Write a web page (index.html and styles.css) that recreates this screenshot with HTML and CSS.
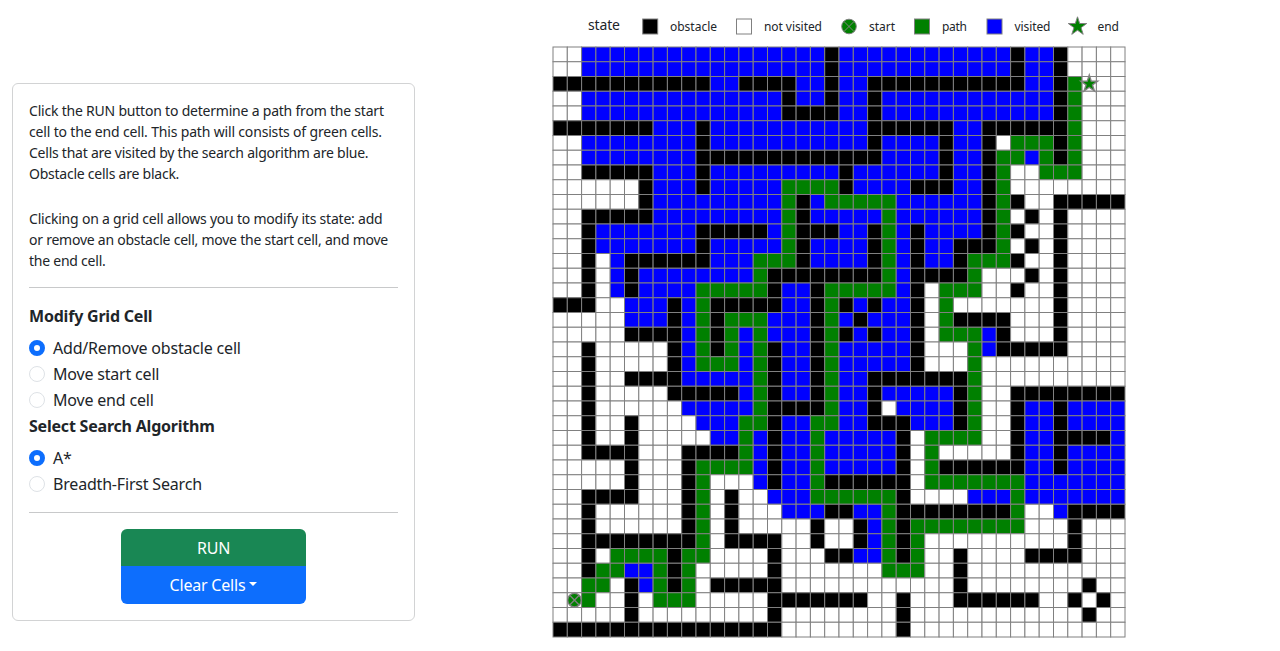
FILE: index.html
```html
<!DOCTYPE html>
<html lang="en">
<head>
<meta charset="utf-8">
<title>Path Finder</title>
<link rel="stylesheet" href="styles.css">
</head>
<body>
<main class="page">
  <section class="card">
    <p class="info"><span class="loose">Click the RUN button to determine a path from the start</span><br><span class="looser">cell to the end cell. This path will consists of green cells.</span><br>Cells that are visited by the search algorithm are blue.<br>Obstacle cells are black.</p>
    <p class="info"><span class="loose">Clicking on a grid cell allows you to modify its state: add</span><br>or remove an obstacle cell, move the start cell, and move<br>the end cell.</p>
    <hr class="rule">
    <h2 class="heading">Modify Grid Cell</h2>
    <label class="option"><input type="radio" class="radio" name="modify" checked><span>Add/Remove obstacle cell</span></label>
    <label class="option"><input type="radio" class="radio" name="modify"><span>Move start cell</span></label>
    <label class="option"><input type="radio" class="radio" name="modify"><span>Move end cell</span></label>
    <h2 class="heading">Select Search Algorithm</h2>
    <label class="option"><input type="radio" class="radio" name="algo" checked><span>A*</span></label>
    <label class="option"><input type="radio" class="radio" name="algo"><span>Breadth-First Search</span></label>
    <hr class="rule low">
    <div class="buttons">
      <button class="btn run">RUN</button>
      <button class="btn clear">Clear Cells<span class="caret"></span></button>
    </div>
  </section>
  <svg class="chart" id="chart" width="590" height="645" viewBox="545 0 590 645"></svg>
</main>
<script src="grid.js"></script>
</body>
</html>
```
FILE: styles.css
```css
* { box-sizing: border-box; }
body {
  margin: 0;
  background: #fff;
  color: #212529;
  font-family: "Noto Sans", "Open Sans", sans-serif;
  font-size: 16px;
  overflow: hidden;
}
.page { display: flex; align-items: flex-start; height: 651px; padding-left: 12px; }
.card {
  width: 403px;
  height: 538px;
  margin-top: 83px;
  padding: 16px;
  border: 1px solid #d2d3d4;
  border-radius: 6px;
}
.info { margin: 0 0 24px; font-size: 14px; line-height: 21px; letter-spacing: -0.24px; white-space: nowrap; }
.loose { letter-spacing: -0.21px; }
.looser { letter-spacing: -0.17px; }
.info + .rule { margin-top: -8px; }
.rule { margin: 0 0 16px; height: 1px; border: 0; background: #c8c9ca; }
.heading { margin: 0 0 8px; font-size: 16px; line-height: 24px; font-weight: 700; letter-spacing: -0.21px; }
.option { display: flex; align-items: center; gap: 8px; height: 24px; margin-bottom: 2px; line-height: 24px; letter-spacing: -0.19px; }
.radio {
  appearance: none;
  width: 16px;
  height: 16px;
  margin: 0;
  border: 1px solid #dee2e6;
  border-radius: 50%;
  background: #fff;
}
.radio:checked { border: 5px solid #0d6efd; }
.low { margin-top: 16px; }
.buttons { display: flex; flex-direction: column; width: 185px; margin: 0 auto; }
.btn {
  display: flex;
  align-items: center;
  justify-content: center;
  height: 38px;
  padding: 0;
  border: 0;
  color: #fff;
  font: inherit;
  letter-spacing: -0.2px;
}
.run { height: 37px; background: #198754; border-radius: 6px 6px 0 0; }
.clear { background: #0d6efd; border-radius: 0 0 6px 6px; }
.caret { margin-left: 4px; margin-top: -2px; border: 4.8px solid transparent; border-top-color: #fff; border-bottom: 0; }
.chart { margin-left: 130px; flex: none; }
.cell { stroke: #808080; stroke-width: 1; }
.obstacle { fill: #000; }
.empty { fill: #fff; }
.visited { fill: #00f; }
.trail { fill: #008000; }
.marker { stroke-width: 1.4; }
.cross { fill: none; stroke: #808080; stroke-width: 1; }
.cross.marker { stroke-width: 1.4; }
.legend-label { font-size: 12px; fill: #212529; }
.legend-title { font-size: 14px; fill: #212529; }
```
FILE: grid.js
```js
const ROWS = [
  "..bbbbbbbb bbbbbbbbb# bbbbbbbbbb bb#bb#....",
  "..bbbbbbbb bbbbbbbbb# bbbbbbbbbb bb#bb#....",
  "########## #bb####bb# bb######## ###bb#gE..",
  "..bbbbbbbb bbbbbb#bb# bb#bbbbbbb bbbbb#g...",
  "..bbbbbbbb bbbbbb#### bb#bbbbbbb bbbbb#g...",
  "#######bbb #bbbbbbbbb bb######bb ######g...",
  "..bbbbbbbb #bbbbbbbbb bb#bbbb#bb #.ggg#g...",
  "..bbbbbbbb ########## ###bbbb#bb #ggbg#g...",
  "..#####bbb #bbbbbbbbb #bbbbbb#bb #g..ggg...",
  "......#bbb #bbbbbgggg #bbbb###bb #g........",
  "......#bbb bbbbbbg#bg ggggbbbbbb #g#..#####",
  "..#####bbb bbbbbbg#bb bbbgbbbbbb #g.#.#....",
  "..#bbbbbbb #####bg### bb#gb#bbbb #g#..#....",
  "..#bbbbbbb #bbbbbg#bb bb#gb#bb## #g.#.#....",
  "..#.b##### #bbbggg#bb bb#gb#bb#g gg#..#....",
  "..#.b#bbbb bbbbg##### ###gb####g ...#.#....",
  "..#.b#bbbb ggggg#bb#g ggggb#.ggg ..#..#....",
  "###..bbb#b g#####bb#g #b#bb#.g.. .....#....",
  ".....bbb#b g#gggbbb#g b#bbb#.g## ##...#....",
  ".....####b g#gbgbbb#g #b#bb#.ggg b#...#....",
  "..#.....#b g#gbg#bb#g bbbbb#...g b#####....",
  "..#.....#b gggbg#bb#g bbbbb#...g ..........",
  "..#..####b bbbbg#bb#g bb#######g ..........",
  "..#.....## ###bg#bb#g bb#bbbbb#g ..########",
  "..#......b bbbbg####g bb#.bbbb#g ..#bb#bbbb",
  "..#..#.... bbbgg#bbgg bb###bbb#g ..#bb#bbbb",
  "..#..#.... .bbgb#bbgb bbbb#.gggg ..#bb####b",
  "..####...# ###gb#bbgb bbbb#.g... ..#bb#bbbb",
  ".....#...# ggggb#bbgb bbbb#.g### ###bb#bbbb",
  ".....#...# g...b#bbg# #####.gggg gggbbbbbbb",
  "..####...# g.#..bbbgg gggg#....b bbgbbbbbbb",
  "..#......# g.#...bbb# #bbg###### ##g..b####",
  "..#......# g.#.....#. .#bg#ggggg ggg...#...",
  "..######## g.####..#. .#bg#g.... ......#...",
  "..#.gggg#g g....#...# #bbg#g..#. ...####...",
  "..#ggbbg#g .....#.... ...ggg..#. ..........",
  "..gg.#bg#g .#####.... ........#. .......#..",
  ".Sg..#.ggg .....##### ##..#...## ####..#.#.",
  ".....#.... .....#.... ....#..... .......#..",
  "########## ######.... ....#..... .........."
];
const KIND = { "#": "obstacle", ".": "empty", b: "visited", g: "trail", S: "empty", E: "empty" };
const X0 = 553, Y0 = 47, W = 14.3, H = 14.75;

function rect(x, y, w, h, kind) {
  return `<rect class="cell ${kind}" x="${x}" y="${y}" width="${w}" height="${h}"/>`;
}
function start(cx, cy, r, extra = "") {
  const d = r * 0.7;
  return `<circle class="cell trail ${extra}" cx="${cx}" cy="${cy}" r="${r}"/>` +
    `<path class="cross ${extra}" d="M${cx - d} ${cy - d}L${cx + d} ${cy + d}M${cx - d} ${cy + d}L${cx + d} ${cy - d}"/>`;
}
function star(cx, cy, r, extra = "") {
  const pts = [];
  for (let i = 0; i < 10; i++) {
    const a = -Math.PI / 2 + i * Math.PI / 5, q = i % 2 ? r * 0.382 : r;
    pts.push((cx + q * Math.cos(a)).toFixed(2) + "," + (cy + q * Math.sin(a)).toFixed(2));
  }
  return `<polygon class="cell trail ${extra}" points="${pts.join(" ")}"/>`;
}
function label(x, w, text) {
  return `<text class="legend-label" x="${x}" y="31" textLength="${w}">${text}</text>`;
}

let cells = "", marks = "";
ROWS.forEach((row, r) => {
  [...row.replace(/ /g, "")].forEach((ch, c) => {
    const x = X0 + c * W, y = Y0 + r * H;
    cells += rect(x.toFixed(2), y.toFixed(2), W, H, KIND[ch]);
    if (ch === "S") marks += start(x + W / 2, y + H / 2, 6.8, "marker");
    if (ch === "E") marks += star(x + W / 2, y + H / 2, 8.8, "marker");
  });
});
const legend =
  '<text class="legend-title" x="588" y="30" textLength="32">state</text>' +
  rect(642.7, 19, 15, 15, "obstacle") + label(670, 47, "obstacle") +
  rect(736.5, 19, 15, 15, "empty") + label(764, 58, "not visited") +
  start(849, 26.5, 7.3) + label(869, 26, "start") +
  rect(914.5, 19, 15, 15, "trail") + label(942, 25, "path") +
  rect(987, 19, 15, 15, "visited") + label(1014.5, 36, "visited") +
  star(1077.5, 26.5, 9.7) + label(1097.5, 21.5, "end");
document.getElementById("chart").innerHTML = cells + marks + legend;
```
